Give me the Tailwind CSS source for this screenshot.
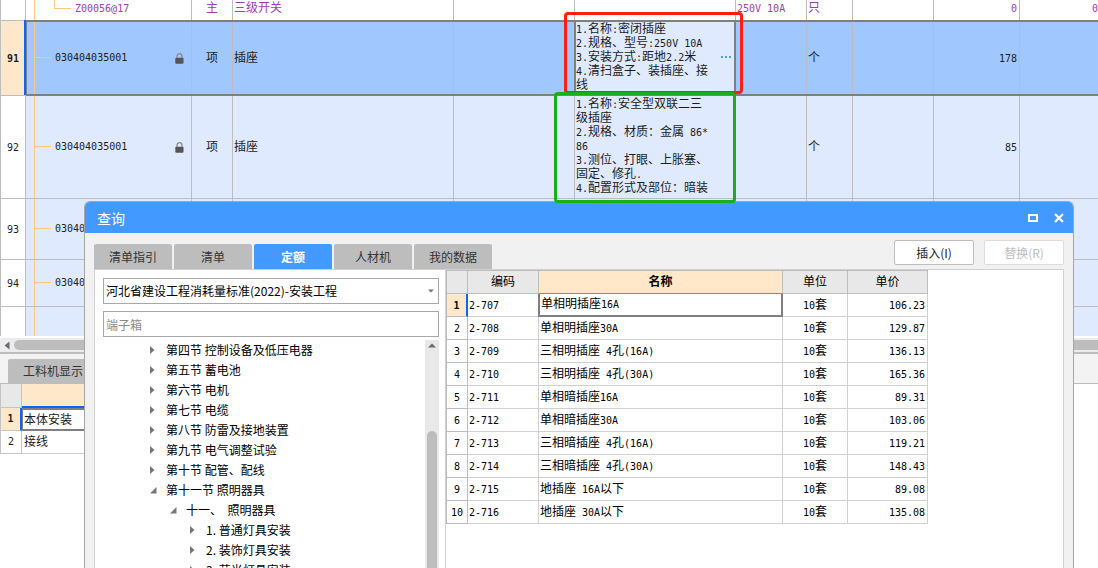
<!DOCTYPE html>
<html lang="zh-CN">
<head>
<meta charset="utf-8">
<meta name="viewport" content="width=device-width, initial-scale=1">
<title>查询</title>
<script src="https://cdn.jsdelivr.net/npm/@tailwindcss/browser@4"></script>
</head>
<body class="relative flex h-screen flex-col overflow-hidden bg-white font-['DejaVu_Sans_Mono','Noto_Sans_CJK_SC',monospace] text-xs text-[#1c1c1c]">

<!-- Bill of quantities grid -->
<main class="relative shrink-0 overflow-hidden">
  <table class="w-full table-fixed border-separate border-spacing-0 whitespace-nowrap [&_span]:text-[10px] [&_span]:leading-none [&_td]:border-r [&_td]:border-b [&_td]:border-[#bdbdbd] [&_td]:p-0 [&_td:last-child]:border-r-0 [&_th]:border-x [&_th]:border-b [&_th]:border-[#bdbdbd] [&_th]:p-0 [&_th]:font-normal">
    <colgroup>
      <col class="w-[26px]"><col class="w-[166px]"><col class="w-[41px]"><col class="w-[221px]"><col class="w-[121px]"><col class="w-[161px]"><col class="w-[71px]"><col class="w-[46px]"><col class="w-[81px]"><col class="w-[86px]"><col>
    </colgroup>
    <tbody>
      <tr class="h-[21px] leading-4 text-[#a03cb4]">
        <th></th>
        <td><div class="flex h-5 pl-2"><i class="w-5 border-l border-[#ffc77d]"></i><i class="h-[9px] w-[17px] border-b border-l border-[#ffc77d]"></i><span class="ml-1 pt-1">Z00056@17</span></div></td>
        <td class="text-center align-top">主</td>
        <td class="align-top"><div class="pl-px">三级开关</div></td>
        <td></td><td></td>
        <td class="align-top"><div class="pl-px"><span>250V 10A</span></div></td>
        <td class="align-top"><div class="pl-px">只</div></td>
        <td></td>
        <td class="text-right align-top"><div class="pr-0.5"><span>0</span></div></td>
        <td class="text-right align-top"><span>0</span></td>
      </tr>
      <tr class="h-[75px] bg-[#a0c8ff]">
        <th class="bg-[#ffe7c9]"><span class="font-bold">91</span></th>
        <td class="align-top"><div class="flex h-[74px] items-center pl-2"><i class="flex h-full w-[17px] items-start border-l border-[#ffc77d]"><i class="h-[37px] w-full border-b border-[#ffc77d]"></i></i><span class="ml-1 flex-1">030404035001</span>
          <svg class="mr-[7px] h-[11px] w-[9px]" viewBox="0 0 9 11" aria-label="锁定"><path d="M2 5V3.2a2.5 2.5 0 0 1 5 0V5" fill="none" stroke="#8a8a8a" stroke-width="1.3"/><rect x="0.3" y="4.7" width="8.2" height="6" rx="1" fill="#555"/></svg></div></td>
        <td class="text-center">项</td>
        <td><div class="pl-px">插座</div></td>
        <td></td>
        <td class="bg-[#dfeaff] align-top"><div class="flex items-center justify-between pt-px pr-1 pl-px leading-[14px]">
          <p><span>1.</span>名称<span>:</span>密闭插座<br><span>2.</span>规格、型号<span>:250V 10A</span><br><span>3.</span>安装方式<span>:</span>距地<span>2.2</span>米<br><span>4.</span>清扫盒子、装插座、接<br>线</p>
          <button type="button" class="flex gap-0.5" aria-label="编辑项目特征"><i class="size-0.5 bg-[#4ba3dc]"></i><i class="size-0.5 bg-[#4ba3dc]"></i><i class="size-0.5 bg-[#4ba3dc]"></i></button></div></td>
        <td></td>
        <td><div class="pl-px">个</div></td>
        <td></td>
        <td class="text-right"><div class="pr-0.5"><span>178</span></div></td>
        <td></td>
      </tr>
      <tr class="h-[103px] bg-[#dfeaff]">
        <th class="bg-white"><span>92</span></th>
        <td class="align-top"><div class="flex h-[102px] items-center pl-2"><i class="flex h-full w-[17px] items-start border-l border-[#ffc77d]"><i class="h-[51px] w-full border-b border-[#ffc77d]"></i></i><span class="ml-1 flex-1">030404035001</span>
          <svg class="mr-[7px] h-[11px] w-[9px]" viewBox="0 0 9 11" aria-label="锁定"><path d="M2 5V3.2a2.5 2.5 0 0 1 5 0V5" fill="none" stroke="#8a8a8a" stroke-width="1.3"/><rect x="0.3" y="4.7" width="8.2" height="6" rx="1" fill="#555"/></svg></div></td>
        <td class="text-center">项</td>
        <td><div class="pl-px">插座</div></td>
        <td></td>
        <td class="align-top"><p class="pt-px pl-px leading-[14px]"><span>1.</span>名称<span>:</span>安全型双联二三<br>级插座<br><span>2.</span>规格、材质：金属<span> 86*</span><br><span>86</span><br><span>3.</span>测位、打眼、上胀塞、<br>固定、修孔<span>.</span><br><span>4.</span>配置形式及部位：暗装</p></td>
        <td></td>
        <td><div class="pl-px">个</div></td>
        <td></td>
        <td class="text-right"><div class="pr-0.5"><span>85</span></div></td>
        <td></td>
      </tr>
      <tr class="h-[61px] bg-[#dfeaff]">
        <th class="bg-white"><span>93</span></th>
        <td class="align-top"><div class="flex h-[60px] items-center pl-2"><i class="flex h-full w-[17px] items-start border-l border-[#ffc77d]"><i class="h-[30px] w-full border-b border-[#ffc77d]"></i></i><span class="ml-1">030404035001</span></div></td>
        <td></td><td></td><td></td><td></td><td></td><td></td><td></td><td></td><td></td>
      </tr>
      <tr class="h-[47px] bg-[#dfeaff]">
        <th class="bg-white"><span>94</span></th>
        <td class="align-top"><div class="flex h-[46px] items-center pl-2"><i class="flex h-full w-[17px] items-start border-l border-[#ffc77d]"><i class="h-[23px] w-full border-b border-[#ffc77d]"></i></i><span class="ml-1">030404035001</span></div></td>
        <td></td><td></td><td></td><td></td><td></td><td></td><td></td><td></td><td></td>
      </tr>
      <tr class="h-[29px] bg-[#dfeaff] [&_td]:border-b-0 [&_th]:border-b-0">
        <th class="bg-white"></th>
        <td><div class="flex h-[29px] pl-2"><i class="w-4 border-l border-[#ffc77d]"></i></div></td>
        <td></td><td></td><td></td><td></td><td></td><td></td><td></td><td></td><td></td>
      </tr>
    </tbody>
  </table>
  <!-- Selected row and active cell frames -->
  <div class="pointer-events-none absolute top-5 right-0 left-[26px] h-[76px] border-y-2 border-l border-[#7f7f7f]"></div>
  <div class="pointer-events-none absolute top-5 left-6 h-[75px] w-0.5 bg-[#0a64ff]"></div>
  <div class="pointer-events-none absolute top-5 left-[574px] h-[76px] w-[162px] border-2 border-[#7f7f7f]"></div>
</main>

<!-- Horizontal scroll bar -->
<div class="mt-0.5 flex h-[14px] shrink-0 items-center bg-[#ececec] pl-1">
  <svg class="h-[9px] w-[6px]" viewBox="0 0 6 9"><path d="M5.5 0.5v8L0.5 4.5z" fill="#6b6b76"/></svg>
  <div class="ml-1 h-[10px] flex-1 rounded-l-full bg-[#bdbdbd]"></div>
</div>
<div class="h-0.5 shrink-0 bg-[#bdbdbd]"></div>

<!-- Lower pane -->
<section class="flex-1">
  <div class="flex h-[30px] items-end border-b border-[#bdbdbd] bg-[#f3f3f3] pl-2 font-['Noto_Sans_CJK_SC',sans-serif]">
    <button type="button" class="h-6 rounded-t-xs bg-[#bdbdbd] px-[15px] text-[#333]">工料机显示</button>
  </div>
  <table class="w-[360px] table-fixed border-separate border-spacing-0 [&_td]:p-0 [&_th]:p-0">
    <colgroup><col class="w-[22px]"><col></colgroup>
    <thead><tr class="h-6"><th class="border-x border-b border-[#c4c4c4] bg-[#e8e8e8]"></th><th class="border-b-2 border-[#0a64ff] bg-[#ffe7c9]"></th></tr></thead>
    <tbody>
      <tr class="h-[23px]"><th class="border-r-2 border-b border-l border-[#c4c4c4] border-r-[#0a64ff] bg-[#ffe7c9] text-[10px]">1</th><td class="border-y-2 border-l border-[#7f7f7f] leading-4"><div class="pl-px">本体安装</div></td></tr>
      <tr class="h-[23px]"><th class="border-x border-b border-[#c4c4c4] text-[10px] font-normal">2</th><td class="border-b border-[#d0d0d0] leading-4"><div class="pl-0.5">接线</div></td></tr>
    </tbody>
  </table>
</section>

<!-- Query dialog, floating over the main window -->
<section role="dialog" aria-labelledby="dlg-title" class="absolute top-[201px] right-6 bottom-0 left-[84px] flex flex-col overflow-hidden rounded-t-md border-x border-t border-[#a5a5a5] bg-[#f1f1f1] font-['Noto_Sans_CJK_SC',sans-serif] text-black">
  <header class="flex h-[31px] shrink-0 items-center bg-[#4299ff] pr-[9px] pl-3 text-white">
    <h1 id="dlg-title" class="flex-1 text-sm leading-5">查询</h1>
    <button type="button" aria-label="最大化"><svg class="mr-4 h-[10px] w-[10px]" viewBox="0 0 10 10"><path d="M0 1h10v8H0zM2 3v4h6V3z" fill="#fff" fill-rule="evenodd"/></svg></button>
    <button type="button" aria-label="关闭"><svg class="h-[10px] w-[10px]" viewBox="0 0 10 10"><path d="M1 1l8 8M9 1L1 9" stroke="#fff" stroke-width="2.2"/></svg></button>
  </header>

  <div class="flex h-9 shrink-0 items-end justify-between px-[9px]">
    <nav class="flex gap-0.5 text-[#333] [&_button]:h-[25px] [&_button]:w-[78px] [&_button]:rounded-t-xs">
      <button type="button" class="bg-[#bdbdbd]">清单指引</button>
      <button type="button" class="bg-[#bdbdbd]">清单</button>
      <button type="button" class="bg-[#4299ff] font-bold text-white">定额</button>
      <button type="button" class="bg-[#bdbdbd]">人材机</button>
      <button type="button" class="bg-[#bdbdbd]">我的数据</button>
    </nav>
    <div class="mb-1 flex gap-2.5 [&_button]:h-[25px] [&_button]:w-20 [&_button]:rounded-xs [&_button]:border [&_button]:bg-white">
      <button type="button" class="border-[#bdbdbd] text-[#222]">插入(I)</button>
      <button type="button" disabled class="border-[#dcdcdc] text-[#bdbdbd]">替换(R)</button>
    </div>
  </div>

  <div class="mx-[9px] flex min-h-0 flex-1 border-x border-t border-[#d0d0d0] bg-white">
    <aside class="flex w-[350px] shrink-0 flex-col pt-2 pr-1.5 pl-2">
      <label class="relative block">
        <select aria-label="定额库" class="block h-[26px] w-full appearance-none border border-[#a8a8a8] bg-white px-0.5"><option>河北省建设工程消耗量标准(2022)-安装工程</option></select>
        <svg class="pointer-events-none absolute top-[11px] right-[5px] h-[4px] w-[6px]" viewBox="0 0 6 4"><path d="M0 0.5h6L3 3.5z" fill="#777"/></svg>
      </label>
      <input type="text" aria-label="搜索" placeholder="端子箱" class="mt-[7px] block h-[26px] w-full shrink-0 border border-[#a8a8a8] px-0.5 placeholder:text-[#8a8a8a]">
      <div class="mt-[3px] flex min-h-0 flex-1 overflow-hidden">
        <ul class="min-w-0 flex-1 whitespace-nowrap [&_li]:flex [&_li]:h-5 [&_li]:items-center [&_svg]:h-2 [&_svg]:w-2 [&_svg]:fill-[#777]">
          <li class="gap-2 pl-[47px]"><svg viewBox="0 0 8 8"><path d="M0 0v8L4.5 4z"/></svg>第四节 控制设备及低压电器</li>
          <li class="gap-2 pl-[47px]"><svg viewBox="0 0 8 8"><path d="M0 0v8L4.5 4z"/></svg>第五节 蓄电池</li>
          <li class="gap-2 pl-[47px]"><svg viewBox="0 0 8 8"><path d="M0 0v8L4.5 4z"/></svg>第六节 电机</li>
          <li class="gap-2 pl-[47px]"><svg viewBox="0 0 8 8"><path d="M0 0v8L4.5 4z"/></svg>第七节 电缆</li>
          <li class="gap-2 pl-[47px]"><svg viewBox="0 0 8 8"><path d="M0 0v8L4.5 4z"/></svg>第八节 防雷及接地装置</li>
          <li class="gap-2 pl-[47px]"><svg viewBox="0 0 8 8"><path d="M0 0v8L4.5 4z"/></svg>第九节 电气调整试验</li>
          <li class="gap-2 pl-[47px]"><svg viewBox="0 0 8 8"><path d="M0 0v8L4.5 4z"/></svg>第十节 配管、配线</li>
          <li class="gap-2 pl-[47px]"><svg viewBox="0 0 8 8"><path d="M6.5 1v6.5H0z"/></svg>第十一节 照明器具</li>
          <li class="gap-2 pl-[67px]"><svg viewBox="0 0 8 8"><path d="M6.5 1v6.5H0z"/></svg>十一、&nbsp; 照明器具</li>
          <li class="gap-2 pl-[87px]"><svg viewBox="0 0 8 8"><path d="M0 0v8L4.5 4z"/></svg>1. 普通灯具安装</li>
          <li class="gap-2 pl-[87px]"><svg viewBox="0 0 8 8"><path d="M0 0v8L4.5 4z"/></svg>2. 装饰灯具安装</li>
          <li class="gap-2 pl-[87px]"><svg viewBox="0 0 8 8"><path d="M0 0v8L4.5 4z"/></svg>3. 荧光灯具安装</li>
        </ul>
        <div class="flex w-[14px] flex-col items-center bg-[#e8e8e8] pt-[3px]">
          <svg class="h-[5px] w-[8px] shrink-0" viewBox="0 0 8 5"><path d="M0 4.5L4 0.5l4 4z" fill="#6b6b76"/></svg>
          <div class="mt-[83px] w-[10px] flex-1 rounded-t-full bg-[#bdbdbd]"></div>
        </div>
      </div>
    </aside>

    <div class="min-w-0 flex-1 border-l border-[#d0d0d0] font-['DejaVu_Sans_Mono','Noto_Sans_CJK_SC',monospace]">
      <table class="w-[482px] table-fixed border-separate border-spacing-0 whitespace-nowrap leading-4 [&_span]:text-[10px] [&_span]:leading-none [&_tbody_th]:border-r [&_tbody_th]:border-b [&_tbody_th]:border-l [&_tbody_th]:border-[#bdbdbd] [&_tbody_th]:font-normal [&_td]:border-r [&_td]:border-b [&_td]:border-[#d0d0d0] [&_td]:px-px [&_td]:py-0 [&_th]:p-0 [&_thead_th]:border-y [&_thead_th]:border-r [&_thead_th]:border-[#bdbdbd] [&_tr]:h-[23px]">
        <colgroup><col class="w-[22px]"><col class="w-[71px]"><col class="w-[244px]"><col class="w-[65px]"><col class="w-[80px]"></colgroup>
        <thead>
          <tr class="h-6! bg-[#e8e8e8] [&_th]:font-normal">
            <th class="border-l"></th><th>编码</th><th class="border-b-[#4299ff]! bg-[#ffe7c9] font-bold!">名称</th><th>单位</th><th>单价</th>
          </tr>
        </thead>
        <tbody>
          <tr><th class="border-r-2! border-r-[#0a64ff]! bg-[#ffe7c9]"><span class="font-bold">1</span></th><td><span>2-707</span></td><td class="p-0!"><div class="-mr-px -mb-px -ml-px h-[23px] border-2 border-t-0 border-[#7f7f7f] pt-px pl-px leading-[18px]">单相明插座<span>16A</span></div></td><td class="text-center"><span>10</span>套</td><td class="pr-0.5! text-right"><span>106.23</span></td></tr>
          <tr><th><span>2</span></th><td><span>2-708</span></td><td>单相明插座<span>30A</span></td><td class="text-center"><span>10</span>套</td><td class="pr-0.5! text-right"><span>129.87</span></td></tr>
          <tr><th><span>3</span></th><td><span>2-709</span></td><td>三相明插座<span> 4</span>孔<span>(16A)</span></td><td class="text-center"><span>10</span>套</td><td class="pr-0.5! text-right"><span>136.13</span></td></tr>
          <tr><th><span>4</span></th><td><span>2-710</span></td><td>三相明插座<span> 4</span>孔<span>(30A)</span></td><td class="text-center"><span>10</span>套</td><td class="pr-0.5! text-right"><span>165.36</span></td></tr>
          <tr><th><span>5</span></th><td><span>2-711</span></td><td>单相暗插座<span>16A</span></td><td class="text-center"><span>10</span>套</td><td class="pr-0.5! text-right"><span>89.31</span></td></tr>
          <tr><th><span>6</span></th><td><span>2-712</span></td><td>单相暗插座<span>30A</span></td><td class="text-center"><span>10</span>套</td><td class="pr-0.5! text-right"><span>103.06</span></td></tr>
          <tr><th><span>7</span></th><td><span>2-713</span></td><td>三相暗插座<span> 4</span>孔<span>(16A)</span></td><td class="text-center"><span>10</span>套</td><td class="pr-0.5! text-right"><span>119.21</span></td></tr>
          <tr><th><span>8</span></th><td><span>2-714</span></td><td>三相暗插座<span> 4</span>孔<span>(30A)</span></td><td class="text-center"><span>10</span>套</td><td class="pr-0.5! text-right"><span>148.43</span></td></tr>
          <tr><th><span>9</span></th><td><span>2-715</span></td><td>地插座<span> 16A</span>以下</td><td class="text-center"><span>10</span>套</td><td class="pr-0.5! text-right"><span>89.08</span></td></tr>
          <tr><th><span>10</span></th><td><span>2-716</span></td><td>地插座<span> 30A</span>以下</td><td class="text-center"><span>10</span>套</td><td class="pr-0.5! text-right"><span>135.08</span></td></tr>
        </tbody>
      </table>
    </div>
  </div>
</section>

<!-- Annotation frames -->
<div class="pointer-events-none absolute top-3 left-[564px] h-[82px] w-[179px] rounded-sm border-3 border-[#ff1f10]"></div>
<div class="pointer-events-none absolute top-[92px] left-[554px] h-[111px] w-[182px] rounded-sm border-3 border-[#18b018]"></div>
</body>
</html>
